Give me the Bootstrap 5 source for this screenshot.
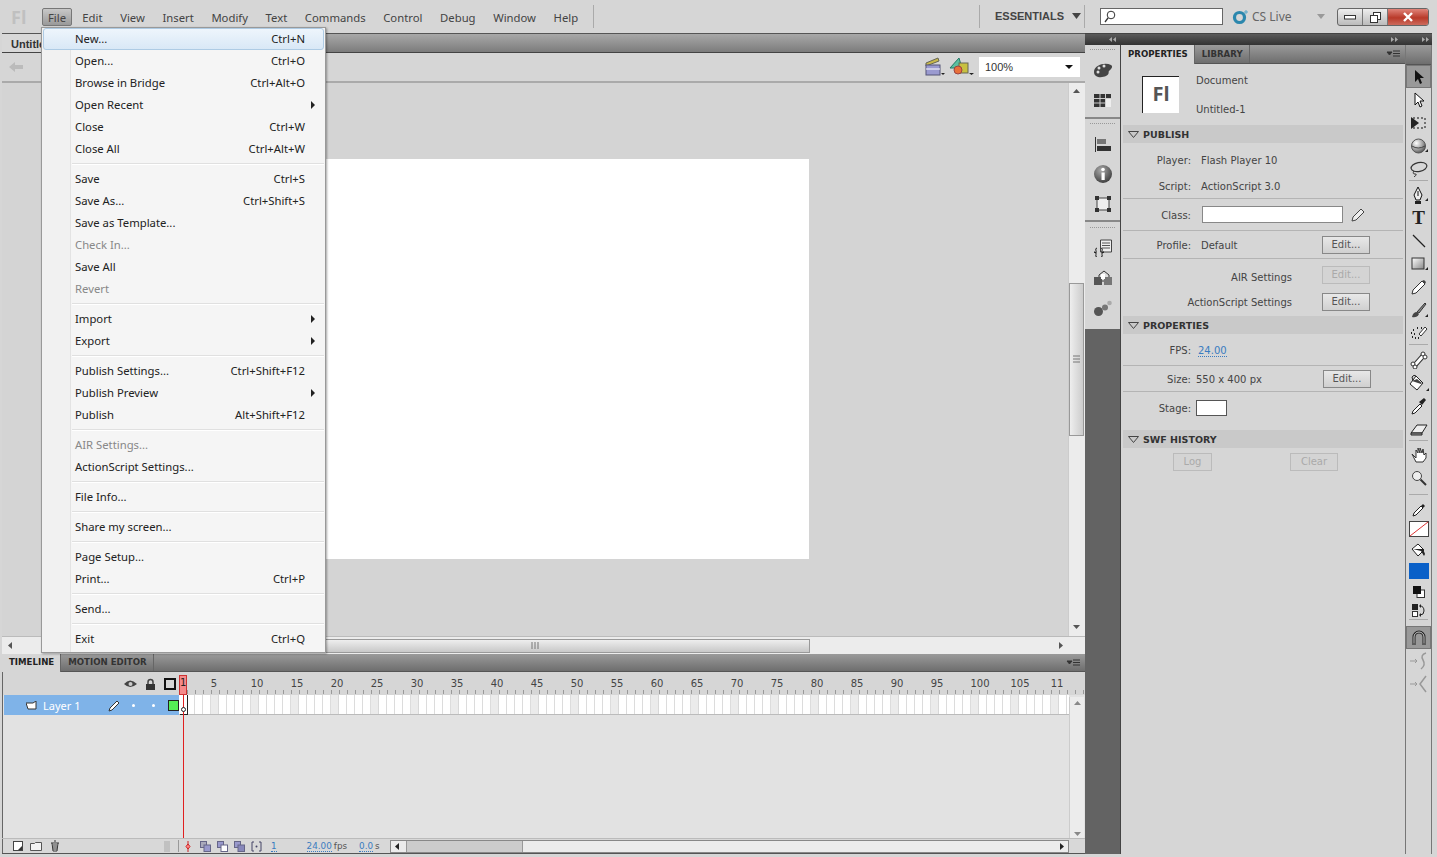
<!DOCTYPE html>
<html lang="en">
<head>
<meta charset="UTF-8">
<title>Adobe Flash Professional</title>
<link href="https://cdn.jsdelivr.net/npm/bootstrap@5.3.0/dist/css/bootstrap.min.css" rel="stylesheet">
<style>
html, body { height: 100%; }
body { width: 1437px; height: 857px; overflow: hidden; background: #d6d6d6; color: #333; font: 11.3px/1 "Noto Sans", sans-serif; position: relative; }
svg { display: block; flex: none; }

/* app menu bar */
.app-bar { height: 33px; padding: 8px 8px 0 11px; color: #444; }
.logo-text { width: 31px; font: bold 18px/18px "Open Sans", sans-serif; color: #c0c0c0; }
.app-item { height: 18px; padding: 0 7.300px; line-height: 17px; border: 1px solid transparent; margin-right: 1px; }
.app-item.on { background: linear-gradient(#c8c8c8, #999); border-color: #777; border-radius: 2px; padding: 0 4px; width: 30px; text-align: center; margin-right: 2px; }
.v-rule { width: 1px; height: 23px; background: #aaa; margin-top: -3px; }
.help-rule { margin-left: 5px; }
.essentials { font: bold 11px "Liberation Sans", sans-serif; color: #444; margin-left: 15px; width: 89px; line-height: 16px; }
.essentials svg { margin-left: 8px; }
.search-box { width: 123px; height: 17px; background: #fff; border: 1px solid #666; margin-left: 15px; padding-left: 3px; }
.cs-live { width: 93px; margin-left: 9px; margin-right: 12px; color: #666; font-size: 12px; gap: 3px; height: 17px; }
.win-btns { width: 92px; height: 18px; border: 1px solid #666; border-radius: 3px; overflow: hidden; background: linear-gradient(#eee, #bbb); }
.win-btn { width: 25px; border-right: 1px solid #777; }
.win-close { flex: 1; background: linear-gradient(#e0847a, #b93a2a 55%, #cc6a5c); }

/* main layout */
.main-row { height: 824px; padding: 0 5px 3px 2px; }
.work-col { width: 1083px; }
.doc-tabs { height: 20px; background: linear-gradient(#a8a8a8, #7c7c7c); border-top: 1px solid #555; border-bottom: 1px solid #444; }
.doc-tab { width: 60px; background: #d8d8d8; padding: 4px 0 0 9px; font: bold 11px "Liberation Sans", sans-serif; color: #333; }
.doc-tools { height: 30px; border-bottom: 2px solid #aaa; padding: 0 5px 0 6px; }
.zoom-select { width: 101px; height: 20px; background: #fff; margin-left: 4px; font: 11px "Liberation Sans", sans-serif; padding-left: 6px; }
.stage-row { height: 553px; }
.stage-area { width: 1066px; background: #d4d4d4; padding: 76px 0 0 257px; }
.stage-sheet { width: 550px; height: 400px; background: #fff; }
.v-scroll { width: 17px; background: #ececec; border-left: 1px solid #ccc; padding: 4px 0; }
.v-thumb { width: 15px; height: 153px; margin: 188px 0 187px; border: 1px solid #999; background: linear-gradient(90deg, #eee, #ccc); }
.h-scroll { height: 18px; background: #ececec; border-top: 1px solid #bbb; padding-right: 20px; }
.h-thumb { width: 550px; height: 14px; margin-left: 246px; border: 1px solid #999; background: linear-gradient(#eee, #c8c8c8); }

/* timeline */
.panel-tabs { height: 18px; background: linear-gradient(#9a9a9a, #6e6e6e); border-bottom: 1px solid #555; font: bold 8.6px "DejaVu Sans", sans-serif; }
.panel-tab { padding: 0 6px 0 7px; line-height: 17px; color: #333; border-right: 1px solid #666; }
.panel-tab.on { background: #d6d6d6; color: #222; height: 18px; }
.tabs-menu { margin-left: auto; margin-right: 4px; }
.tl-head { height: 23px; box-shadow: inset 1px 0 #666; }
.tl-side { width: 177px; padding-right: 3px; }
.tl-ruler { flex: 1; position: relative; font: 10px "DejaVu Sans", sans-serif; color: #444; background: repeating-linear-gradient(90deg, #999 0 1px, transparent 1px 8px) 0 18px / 100% 4px no-repeat; }
.ruler-num { position: absolute; top: 6px; transform: translateX(-50%); }
.tl-grid { height: 143px; background: #e2e2e2; box-shadow: inset 1px 0 #666; }
.tl-layer { height: 20px; }
.layer-row { width: 175px; margin-left: 2px; background: #7fb3e8; color: #fff; font: 11px "Noto Sans", sans-serif; padding-left: 22px; }
.layer-name { width: 70px; margin-left: 6px; }
.layer-dot-a { margin-left: 11px; }
.layer-dot-b { margin-left: 17px; }
.layer-box { margin-left: 13px; }
.tl-frames { flex: 1; border-bottom: 1px solid #bbb; background: repeating-linear-gradient(90deg, transparent 0 32px, #ebebeb 32px 39px, #d8d8d8 39px 40px), repeating-linear-gradient(90deg, #fff 0 7px, #dcdcdc 7px 8px); }
.tl-scroll { width: 15px; margin: 2px 1px 0 0; background: #ececec; border-left: 1px solid #ccc; padding-top: 2px; }
.tl-status { height: 16px; background: #d8d8d8; border-top: 1px solid #bbb; border-bottom: 1px solid #555; box-shadow: inset 1px 0 #666; font: 8.8px "DejaVu Sans", sans-serif; color: #555; }
.tl-status-side { width: 177px; padding: 0 0 0 11px; border-right: 1px solid #999; }
.st-gap-7 { margin-left: 7px; }
.st-marker { margin-left: 6px; }
.st-first { margin-left: 9px; }
.st-gap { margin-left: 6px; }
.st-one { margin-left: 9px; }
.st-fps { margin-left: 30px; }
.st-unit { margin-left: 2px; }
.st-time { margin-left: 12px; }
.tl-link { color: #3a7cc0; border-bottom: 1px dotted #3a7cc0; }
.tl-hscroll { width: 679px; height: 13px; background: #ececec; border: 1px solid #888; margin-left: auto; margin-right: 16px; }
.tl-hthumb { width: 117px; height: 100%; margin-left: 3px; background: #ccc; border-left: 1px solid #999; border-right: 1px solid #999; }
.playhead-box { position: absolute; left: 179px; top: 675px; width: 8px; height: 20px; background: #f58a8a; border: 1px solid #c33; font: 10px "DejaVu Sans", sans-serif; color: #222; text-align: center; line-height: 14px; }
.playhead-line { position: absolute; left: 183px; top: 695px; width: 1px; height: 143px; background: #e02020; }
.key-cell { position: absolute; left: 180px; top: 695px; width: 8px; height: 20px; border: 1px solid #222; border-width: 0 1px 1px 0; background: #fff; }
.key-dot { position: absolute; left: 181px; top: 707px; width: 5px; height: 5px; border: 1px solid #222; border-radius: 50%; background: #fff; }

/* right dock */
.dock-col { width: 347px; }
.dock-head { height: 12px; background: linear-gradient(#5a5a5a, #333); border-top: 1px solid #444; padding: 0 3px 0 24px; }
.dock-body { flex: 1; min-height: 0; }
.icon-strip { width: 36px; background: #636363; border-right: 1px solid #444; }
.strip-group { background: #d6d6d6; border-bottom: 2px solid #888; padding-bottom: 1px; }
.strip-group.first { padding-bottom: 2px; }
.strip-group.last { border-bottom: 0; padding: 1px 0 6px; }
.strip-grip { height: 6px; margin: 2px 5px 2px; background: repeating-linear-gradient(90deg, #999 0 1px, transparent 1px 2px) 0 2px / 100% 1px no-repeat; }
.strip-icon { height: 30px; }
.prop-col { width: 284px; padding: 0 2px; font: 10px "DejaVu Sans", sans-serif; color: #444; }
.prop-tabs { height: 19px; margin: 0 -2px; }
.prop-tabs .panel-tab { line-height: 18px; }
.prop-tabs .panel-tab.on { height: 19px; }
.doc-info { height: 61px; padding-left: 19px; }
.fl-box { width: 37px; height: 37px; background: #fff; border-left: 1px solid #222; border-top: 1px solid #222; font: bold 20px "Open Sans", sans-serif; color: #555; text-align: center; line-height: 34px; }
.doc-text { margin-left: 17px; height: 41px; padding-top: 1px; }
.sec-head { height: 18px; background: #c9c9c9; font: bold 9.5px "DejaVu Sans", sans-serif; color: #333; padding-left: 5px; gap: 4px; }
.prop-row { padding-right: 33px; border-bottom: 1px solid #b4b4b4; }
.prop-row.plain { border-bottom: 0; }
.row-player { height: 30px; padding-top: 2px; }
.row-h26 { height: 26px; }
.row-h26.tight { padding-right: 32px; }
.row-h27 { height: 26px; padding-bottom: 2px; }
.row-h31 { height: 31px; }
.row-fps { height: 32px; }
.row-h28 { height: 28px; }
.row-h32 { height: 32px; }
.row-stage { height: 38px; padding-bottom: 7px; }
.prop-label { width: 68px; text-align: right; flex: none; padding-top: 2px; }
.prop-label.wide { width: 169px; padding-top: 0; }
.prop-label.air { padding-top: 6px; }
.prop-value { margin-left: 10px; padding-top: 2px; }
.prop-value.near { margin-left: 5px; }
.fps-link { color: #3a7cc0; border-bottom: 1px dotted #3a7cc0; margin-left: 7px; margin-top: 2px; }
.class-input { width: 141px; height: 17px; background: #fff; border: 1px solid #888; margin-left: 11px; margin-right: 8px; }
.flash-btn { width: 48px; height: 18px; margin-left: auto; padding: 0; font: 10px/16px "DejaVu Sans", sans-serif; color: #555; border: 1px solid #888; border-radius: 0; background: linear-gradient(#e8e8e8, #d0d0d0); }
.flash-btn:disabled { color: #aaa; border-color: #bbb; opacity: 1; background: #d4d4d4; }
.stage-swatch { width: 31px; height: 16px; background: #fff; border: 1px solid #555; margin-left: 5px; }
.log-row { padding: 5px 65px 0 50px; }
.log-btn { margin: 0; }
.log-btn.short { width: 39px; }

/* tool column */
.tool-col { width: 27px; border-left: 1px solid #777; border-right: 1px solid #777; }
.tool-top { height: 20px; flex: none; background: linear-gradient(#9a9a9a, #6e6e6e); border-bottom: 1px solid #555; }
.tool-btn { height: 23px; }
.tool-btn.on { background: #999; border: 1px solid #777; }
.tool-sep { height: 3px; margin: 0 3px; border-top: 1px solid #aaa; }
.tool-sep.s4 { height: 4px; }
.tool-sep.s7 { height: 7px; }
.tool-sep.s12 { margin-top: 5px; height: 7px; }
.tool-swatch { height: 21px; }
.tool-short { height: 17px; }
.tool-t { font: bold 19px/19px "Liberation Serif", serif; color: #222; }

/* File menu */
.file-menu { position: absolute; left: 41px; top: 27px; width: 285px; height: 626px; background: linear-gradient(90deg, #f1f1f1 0 28px, #e3e3e3 28px 29px, #f5f5f5 29px); border: 1px solid #999; box-shadow: 1px 1px 2px rgba(0,0,0,.35); padding: 0 1px 1px; color: #222; z-index: 5; }
.menu-line { height: 22px; padding: 0 19px 0 32px; position: relative; }
.menu-line.hot { background: linear-gradient(#eef5fc, #d9e8f6); border: 1px solid #aecbe4; border-radius: 3px; padding: 0 18px 0 31px; }
.menu-line.off { color: #888; }
.menu-key { margin-left: auto; }
.menu-arrow { position: absolute; right: 9px; top: 7px; width: 0; height: 0; border-left: 4px solid #222; border-top: 4px solid transparent; border-bottom: 4px solid transparent; }
.menu-sep { height: 8px; padding: 3px 0 3px 29px; }
.menu-sep::after { content: ""; display: block; height: 2px; background: #e0e0e0; border-bottom: 1px solid #fff; }
</style>
</head>
<body>

<svg width="0" height="0" class="position-absolute">
    <defs>
        <radialGradient id="ballFill" cx=".35" cy=".3" r=".8"><stop offset="0" stop-color="#fff"/><stop offset=".6" stop-color="#999"/><stop offset="1" stop-color="#444"/></radialGradient>
        <linearGradient id="boxFill" x1="0" y1="0" x2="1" y2="1"><stop offset="0" stop-color="#fff"/><stop offset="1" stop-color="#888"/></linearGradient>
        <radialGradient id="infoFill" cx=".4" cy=".3" r=".8"><stop offset="0" stop-color="#aaa"/><stop offset="1" stop-color="#333"/></radialGradient>
    </defs>
</svg>

<div class="app-bar d-flex align-items-start">
    <span class="logo-text">Fl</span>
    <div class="d-flex">
        <span class="app-item on">File</span>
        <span class="app-item">Edit</span>
        <span class="app-item">View</span>
        <span class="app-item">Insert</span>
        <span class="app-item">Modify</span>
        <span class="app-item">Text</span>
        <span class="app-item">Commands</span>
        <span class="app-item">Control</span>
        <span class="app-item">Debug</span>
        <span class="app-item">Window</span>
        <span class="app-item">Help</span>
    </div>
    <div class="v-rule help-rule"></div>
    <div class="v-rule ms-auto"></div>
    <div class="essentials d-flex align-items-center">ESSENTIALS<svg width="9" height="6" viewBox="0 0 9 6"><path d="M0 0h9L4.500 6z" fill="#444"/></svg></div>
    <div class="v-rule"></div>
    <div class="search-box d-flex align-items-center"><svg width="12" height="13" viewBox="0 0 12 13"><circle cx="7" cy="5" r="3.800" fill="none" stroke="#333"/><path d="M4 8 1 12" stroke="#333" stroke-width="1.300"/></svg></div>
    <div class="cs-live d-flex align-items-center">
        <svg width="17" height="16" viewBox="0 0 17 16"><circle cx="7.500" cy="8.500" r="5" fill="none" stroke="#2b87ad" stroke-width="3.200"/><path d="M14 1v4M12 3h4" stroke="#5aa8c8"/></svg>
        <span>CS Live</span>
        <svg class="ms-auto" width="8" height="5" viewBox="0 0 8 5"><path d="M0 0h8L4 5z" fill="#999"/></svg>
    </div>
    <div class="win-btns d-flex">
        <div class="win-btn d-flex align-items-center justify-content-center"><svg width="12" height="6" viewBox="0 0 12 6"><rect x=".5" y="1.500" width="11" height="3.500" fill="#fff" stroke="#333"/></svg></div>
        <div class="win-btn d-flex align-items-center justify-content-center"><svg width="11" height="11" viewBox="0 0 11 11"><rect x="3.500" y=".5" width="7" height="7" fill="#fff" stroke="#333"/><rect x=".5" y="3.500" width="7" height="7" fill="#fff" stroke="#333"/></svg></div>
        <div class="win-close d-flex align-items-center justify-content-center"><svg width="12" height="10" viewBox="0 0 12 10"><path d="M2 1l8 8M10 1 2 9" stroke="#fff" stroke-width="2.400"/></svg></div>
    </div>
</div>

<div class="main-row d-flex">
    <div class="work-col d-flex flex-column">
        <div class="doc-tabs d-flex"><div class="doc-tab">Untitled-1</div></div>
        <div class="doc-tools d-flex align-items-center">
            <svg width="15" height="12" viewBox="0 0 15 12"><path d="M15 4H7V1L1 6l6 5V8h8z" fill="#bbb"/></svg>
            <svg class="ms-3" width="22" height="20" viewBox="0 0 22 20"><path d="M3 6 15 1l1 3L3 9z" fill="#c8b84a" stroke="#665"/><rect x="3" y="8" width="14" height="10" fill="#9a9ad0" stroke="#557"/><path d="M3 12h14" stroke="#fff"/></svg>
            <svg class="ms-auto" width="22" height="20" viewBox="0 0 22 20"><path d="M3 6 15 1l1 3L3 9z" fill="#c8b84a" stroke="#665"/><rect x="3" y="8" width="14" height="10" fill="#9a9ad0" stroke="#557"/><path d="M3 12h14" stroke="#fff"/><path d="m18 16 4 0-2 2z" fill="#222"/></svg>
            <svg class="ms-1" width="26" height="20" viewBox="0 0 26 20"><path d="M10 1 1 11h12z" fill="#5bc0a0" stroke="#276"/><rect x="10" y="6" width="9" height="10" fill="#c8c040" stroke="#665"/><circle cx="9" cy="13" r="4" fill="#e8703a" stroke="#944"/><path d="m20 16 5 0-2.500 2z" fill="#222"/></svg>
            <div class="zoom-select d-flex align-items-center justify-content-between">100%<svg width="12" height="8" viewBox="0 0 12 8" class="me-1"><path d="M1 2h8L5 6z" fill="#111"/></svg></div>
        </div>
        <div class="stage-row d-flex">
            <div class="stage-area"><div class="stage-sheet"></div></div>
            <div class="v-scroll">
                <svg width="15" height="8" viewBox="0 0 15 8"><path d="M4 6h7L7.500 2z" fill="#555"/></svg>
                <div class="v-thumb d-flex align-items-center justify-content-center"><svg width="7" height="9" viewBox="0 0 7 9"><path d="M0 1h7M0 4h7M0 7h7" stroke="#777"/></svg></div>
                <svg width="15" height="8" viewBox="0 0 15 8"><path d="M4 2h7L7.500 6z" fill="#555"/></svg>
            </div>
        </div>
        <div class="h-scroll d-flex align-items-center">
            <svg class="ms-1" width="8" height="9" viewBox="0 0 8 9"><path d="M6 1v7L2 4.500z" fill="#555"/></svg>
            <div class="h-thumb d-flex align-items-center justify-content-center"><svg width="9" height="7" viewBox="0 0 9 7"><path d="M1 0v7M4 0v7M7 0v7" stroke="#777"/></svg></div>
            <svg class="ms-auto" width="8" height="9" viewBox="0 0 8 9"><path d="M2 1v7l4-3.500z" fill="#555"/></svg>
        </div>
        <div class="panel-tabs d-flex">
            <div class="panel-tab on">TIMELINE</div>
            <div class="panel-tab">MOTION EDITOR</div>
            <svg class="tabs-menu" width="15" height="17" viewBox="0 0 15 17"><path d="M1 7h5l-2.500 3zM7 6h7M7 8.500h7M7 11h7" stroke="#333" fill="#333"/></svg>
        </div>
        <div class="tl-head d-flex">
            <div class="tl-side d-flex align-items-center justify-content-end gap-2">
                <svg width="13" height="10" viewBox="0 0 13 10"><path d="M0 5q6-7 13 0-7 6-13 0z" fill="#444"/><circle cx="6.500" cy="5" r="2" fill="#ccc"/></svg>
                <svg width="11" height="12" viewBox="0 0 11 12"><path d="M3 6V4a2.500 2.500 0 0 1 5 0v2" fill="none" stroke="#444" stroke-width="1.500"/><rect x="1" y="6" width="9" height="6" fill="#333"/></svg>
                <svg width="12" height="12" viewBox="0 0 12 12"><rect x="1" y="1" width="10" height="10" fill="none" stroke="#111" stroke-width="2"/></svg>
            </div>
            <div class="tl-ruler">
                <span class="ruler-num" style="left:35px">5</span>
                <span class="ruler-num" style="left:78px">10</span>
                <span class="ruler-num" style="left:118px">15</span>
                <span class="ruler-num" style="left:158px">20</span>
                <span class="ruler-num" style="left:198px">25</span>
                <span class="ruler-num" style="left:238px">30</span>
                <span class="ruler-num" style="left:278px">35</span>
                <span class="ruler-num" style="left:318px">40</span>
                <span class="ruler-num" style="left:358px">45</span>
                <span class="ruler-num" style="left:398px">50</span>
                <span class="ruler-num" style="left:438px">55</span>
                <span class="ruler-num" style="left:478px">60</span>
                <span class="ruler-num" style="left:518px">65</span>
                <span class="ruler-num" style="left:558px">70</span>
                <span class="ruler-num" style="left:598px">75</span>
                <span class="ruler-num" style="left:638px">80</span>
                <span class="ruler-num" style="left:678px">85</span>
                <span class="ruler-num" style="left:718px">90</span>
                <span class="ruler-num" style="left:758px">95</span>
                <span class="ruler-num" style="left:801px">100</span>
                <span class="ruler-num" style="left:841px">105</span>
                <span class="ruler-num" style="left:878px">11</span>
            </div>
        </div>
        <div class="tl-grid d-flex">
            <div class="flex-grow-1">
                <div class="tl-layer d-flex">
                    <div class="layer-row d-flex align-items-center">
                        <svg width="11" height="9" viewBox="0 0 11 9"><path d="M0 2h7l3-2v8H2z" fill="#fff" stroke="#333"/></svg>
                        <span class="layer-name">Layer 1</span>
                        <svg width="13" height="13" viewBox="0 0 13 13"><path d="M1 12l1-3 7-7 2 2-7 7z" fill="#fff" stroke="#333"/></svg>
                        <svg class="layer-dot-a" width="3" height="3" viewBox="0 0 3 3"><circle cx="1.500" cy="1.500" r="1.500" fill="#fff"/></svg>
                        <svg class="layer-dot-b" width="3" height="3" viewBox="0 0 3 3"><circle cx="1.500" cy="1.500" r="1.500" fill="#fff"/></svg>
                        <svg class="layer-box" width="11" height="11" viewBox="0 0 11 11"><rect x=".5" y=".5" width="10" height="10" fill="#55ee55" stroke="#222"/></svg>
                    </div>
                    <div class="tl-frames"></div>
                </div>
            </div>
            <div class="tl-scroll d-flex flex-column justify-content-between">
                <svg width="15" height="8" viewBox="0 0 15 8"><path d="M4 6h7L7.500 2z" fill="#888"/></svg>
                <svg width="15" height="8" viewBox="0 0 15 8"><path d="M4 2h7L7.500 6z" fill="#888"/></svg>
            </div>
        </div>
        <div class="tl-status d-flex align-items-center">
            <div class="tl-status-side d-flex align-items-center">
                <svg width="10" height="10" viewBox="0 0 10 10"><rect x=".5" y=".5" width="9" height="9" fill="#fff" stroke="#444"/><path d="M5 9h4V5z" fill="#333"/></svg>
                <svg class="st-gap-7" width="12" height="10" viewBox="0 0 12 10"><path d="M.5 2.500h4l1-1h6v8H.5z" fill="#f4f4f4" stroke="#555"/></svg>
                <svg class="ms-2" width="10" height="12" viewBox="0 0 10 12"><path d="M1 3h8M2 3l1 8h4l1-8M4 1h2M4 4v6M6 4v6" fill="#eee" stroke="#333"/></svg>
                <svg class="ms-auto me-2" width="6" height="11" viewBox="0 0 6 11"><path d="M1 0v11M3 0v11M5 0v11" stroke="#aaa"/></svg>
            </div>
            <svg class="st-marker" width="6" height="11" viewBox="0 0 6 11"><path d="M3 0v11" stroke="#c22"/><path d="M3 3l2 2.500-2 2.500-2-2.500z" fill="#f88" stroke="#c22"/></svg>
            <svg class="st-first" width="11" height="11" viewBox="0 0 11 11"><rect x=".5" y=".5" width="6" height="6" fill="#aab" stroke="#668"/><rect x="4" y="4" width="6.500" height="6.500" fill="#99c" stroke="#668"/></svg>
            <svg class="st-gap" width="11" height="11" viewBox="0 0 11 11"><rect x=".5" y=".5" width="6" height="6" fill="#99c" stroke="#668"/><rect x="4" y="4" width="6.500" height="6.500" fill="#fff" stroke="#668"/></svg>
            <svg class="st-gap" width="11" height="11" viewBox="0 0 11 11"><rect x=".5" y=".5" width="6" height="6" fill="#99c" stroke="#668"/><rect x="4" y="4" width="6.500" height="6.500" fill="#88b" stroke="#668"/></svg>
            <svg class="st-gap" width="11" height="11" viewBox="0 0 11 11"><path d="M3 1H1v9h2M8 1h2v9H8" fill="none" stroke="#446"/><circle cx="5.500" cy="5.500" r="1" fill="#446"/></svg>
            <span class="tl-link st-one">1</span>
            <span class="tl-link st-fps">24.00</span><span class="st-unit">fps</span>
            <span class="tl-link st-time">0.0</span><span class="st-unit">s</span>
            <div class="tl-hscroll d-flex align-items-center">
                <svg width="12" height="9" viewBox="0 0 12 9"><path d="M8 1v7L4 4.500z" fill="#222"/></svg>
                <div class="tl-hthumb"></div>
                <svg class="ms-auto" width="12" height="9" viewBox="0 0 12 9"><path d="M4 1v7l4-3.500z" fill="#222"/></svg>
            </div>
        </div>
    </div>

    <div class="dock-col d-flex flex-column">
        <div class="dock-head d-flex align-items-center">
            <svg width="7" height="5" viewBox="0 0 7 5"><path d="M3 0v5L0 2.500zM7 0v5L4 2.500z" fill="#aaa"/></svg>
            <svg class="ms-auto" width="7" height="5" viewBox="0 0 7 5"><path d="M0 0v5l3-2.500zM4 0v5l3-2.500z" fill="#aaa"/></svg>
            <svg class="ms-4" width="7" height="5" viewBox="0 0 7 5"><path d="M0 0v5l3-2.500zM4 0v5l3-2.500z" fill="#aaa"/></svg>
        </div>
        <div class="dock-body d-flex">
            <div class="icon-strip d-flex flex-column">
                <div class="strip-group first">
                    <div class="strip-grip"></div>
                    <div class="strip-icon d-flex align-items-center justify-content-center"><svg width="20" height="16" viewBox="0 0 20 16"><path d="M1 10C1 3 12 0 18 3c3 2-1 5-2 6s1 3-3 5-12 2-12-4z" fill="#444"/><circle cx="6" cy="6" r="1.500" fill="#ddd"/><circle cx="11" cy="4" r="1.500" fill="#ddd"/><circle cx="5" cy="10" r="1.500" fill="#ddd"/></svg></div>
                    <div class="strip-icon d-flex align-items-center justify-content-center"><svg width="17" height="13" viewBox="0 0 17 13"><rect width="17" height="13" fill="#333"/><path d="M6 0v13M11.500 0v13M0 4.500h17M0 9h17" stroke="#ccc"/><rect x="12" y="5" width="5" height="8" fill="#eee"/></svg></div>
                </div>
                <div class="strip-group">
                    <div class="strip-grip"></div>
                    <div class="strip-icon d-flex align-items-center justify-content-center"><svg width="16" height="15" viewBox="0 0 16 15"><path d="M.5 0v15" stroke="#333"/><rect x="2" y="2" width="9" height="5" fill="#777"/><rect x="2" y="9" width="14" height="5" fill="#333"/></svg></div>
                    <div class="strip-icon d-flex align-items-center justify-content-center"><svg width="18" height="18" viewBox="0 0 18 18"><circle cx="9" cy="9" r="9" fill="url(#infoFill)"/><circle cx="9" cy="4.500" r="1.800" fill="#fff"/><rect x="7.500" y="7.500" width="3.200" height="7.500" fill="#fff"/></svg></div>
                    <div class="strip-icon d-flex align-items-center justify-content-center"><svg width="16" height="16" viewBox="0 0 16 16"><rect x="2" y="2" width="12" height="12" fill="#eee" stroke="#444"/><path d="M0 0h4v4H0zM12 0h4v4h-4zM0 12h4v4H0zM12 12h4v4h-4z" fill="#333"/></svg></div>
                </div>
                <div class="strip-group last">
                    <div class="strip-grip"></div>
                    <div class="strip-icon d-flex align-items-center justify-content-center"><svg width="18" height="18" viewBox="0 0 18 18"><path d="M6.500 1h11v12h-11z" fill="#eee" stroke="#444"/><path d="M8 4h8M8 6.500h8M8 9h8" stroke="#555"/><path d="M3 9Q1 9 2 12t-2 1q3 0 2 2.500T3 18M7 9q2 0 1 3t2 1q-3 0-2 2.500T7 18" fill="none" stroke="#222"/></svg></div>
                    <div class="strip-icon d-flex align-items-center justify-content-center"><svg width="18" height="16" viewBox="0 0 18 16"><path d="M5 5l5-4 5 4v6H5z" fill="#ddd" stroke="#333"/><rect x="0" y="7" width="8" height="8" fill="#555"/><rect x="10" y="7" width="8" height="8" fill="#777"/><rect x="7" y="4" width="4" height="5" fill="#fff"/></svg></div>
                    <div class="strip-icon d-flex align-items-center justify-content-center"><svg width="18" height="16" viewBox="0 0 18 16"><circle cx="4.500" cy="11.500" r="4.500" fill="#555"/><circle cx="11" cy="7.500" r="3" fill="#777"/><circle cx="15.500" cy="3" r="2.300" fill="#aaa"/></svg></div>
                </div>
            </div>

            <div class="prop-col">
                <div class="panel-tabs prop-tabs d-flex">
                    <div class="panel-tab on">PROPERTIES</div>
                    <div class="panel-tab">LIBRARY</div>
                    <svg class="tabs-menu" width="15" height="18" viewBox="0 0 15 18"><path d="M1 7h5l-2.500 3zM7 6h7M7 8.500h7M7 11h7" stroke="#333" fill="#333"/></svg>
                </div>
                <div class="doc-info d-flex align-items-center">
                    <div class="fl-box">Fl</div>
                    <div class="doc-text d-flex flex-column justify-content-between"><span>Document</span><span>Untitled-1</span></div>
                </div>
                <div class="sec-head d-flex align-items-center"><svg width="11" height="7" viewBox="0 0 11 7"><path d="M.5.500h10l-5 6z" fill="none" stroke="#444"/></svg>PUBLISH</div>
                <div class="prop-row plain row-player d-flex align-items-center"><span class="prop-label">Player:</span><span class="prop-value">Flash Player 10</span></div>
                <div class="prop-row row-h26 d-flex align-items-center"><span class="prop-label">Script:</span><span class="prop-value">ActionScript 3.0</span></div>
                <div class="prop-row row-h32 d-flex align-items-center"><span class="prop-label">Class:</span><div class="class-input"></div><svg width="15" height="15" viewBox="0 0 15 15"><path d="M1 14l1-4 8-8 3 3-8 8z" fill="#eee" stroke="#444"/></svg></div>
                <div class="prop-row row-h28 d-flex align-items-center"><span class="prop-label">Profile:</span><span class="prop-value">Default</span><button class="btn flash-btn" type="button">Edit...</button></div>
                <div class="prop-row plain row-h31 d-flex align-items-center"><span class="prop-label wide air">AIR Settings</span><button class="btn flash-btn" type="button" disabled>Edit...</button></div>
                <div class="prop-row plain row-h27 d-flex align-items-center"><span class="prop-label wide">ActionScript Settings</span><button class="btn flash-btn" type="button">Edit...</button></div>
                <div class="sec-head d-flex align-items-center"><svg width="11" height="7" viewBox="0 0 11 7"><path d="M.5.500h10l-5 6z" fill="none" stroke="#444"/></svg>PROPERTIES</div>
                <div class="prop-row row-fps d-flex align-items-center"><span class="prop-label">FPS:</span><span class="fps-link">24.00</span></div>
                <div class="prop-row row-h26 tight d-flex align-items-center"><span class="prop-label">Size:</span><span class="prop-value near">550 x 400 px</span><button class="btn flash-btn" type="button">Edit...</button></div>
                <div class="prop-row plain row-stage d-flex align-items-center"><span class="prop-label">Stage:</span><div class="stage-swatch"></div></div>
                <div class="sec-head d-flex align-items-center"><svg width="11" height="7" viewBox="0 0 11 7"><path d="M.5.500h10l-5 6z" fill="none" stroke="#444"/></svg>SWF HISTORY</div>
                <div class="log-row d-flex justify-content-between">
                    <button class="btn flash-btn log-btn short" type="button" disabled>Log</button>
                    <button class="btn flash-btn log-btn" type="button" disabled>Clear</button>
                </div>
            </div>

            <div class="tool-col d-flex flex-column">
                <div class="tool-top"></div>
                <div class="tool-btn on d-flex align-items-center justify-content-center"><svg width="12" height="16" viewBox="0 0 12 16"><path d="M2 1v12l3-3 2 5 2-1-2-5h4z" fill="#111"/></svg></div>
                <div class="tool-btn d-flex align-items-center justify-content-center"><svg width="12" height="16" viewBox="0 0 12 16"><path d="M2 1v12l3-3 2 5 2-1-2-5h4z" fill="#fff" stroke="#111"/></svg></div>
                <div class="tool-btn d-flex align-items-center justify-content-center"><svg width="18" height="16" viewBox="0 0 18 16"><path d="M3 3h12v10H3z" fill="none" stroke="#111" stroke-dasharray="2 2"/><path d="M1 2l8 6-8 6z" fill="#222"/></svg></div>
                <div class="tool-btn d-flex align-items-center justify-content-center"><svg width="18" height="16" viewBox="0 0 18 16"><circle cx="8.500" cy="8" r="7" fill="url(#ballFill)" stroke="#555"/><path d="M2 8q6 4 13 0" fill="none" stroke="#444"/><path d="m15 14 3 0 0-3z" fill="#222"/></svg></div>
                <div class="tool-btn d-flex align-items-center justify-content-center"><svg width="18" height="16" viewBox="0 0 18 16"><ellipse cx="9" cy="6" rx="8" ry="4.500" fill="none" stroke="#333" stroke-width="1.200" transform="rotate(-12 9 6)"/><path d="M4 10q-2 3 1 3t-1 3" fill="none" stroke="#333"/></svg></div>
                <div class="tool-sep"></div>
                <div class="tool-btn d-flex align-items-center justify-content-center"><svg width="18" height="18" viewBox="0 0 18 18"><path d="M8 1l4 8-2 5H6L4 9z" fill="#eee" stroke="#111"/><path d="M8 5v5" stroke="#111"/><path d="M5 15h6v3H5z" fill="#222"/><path d="m15 15 3 0 0-3z" fill="#222"/></svg></div>
                <div class="tool-btn d-flex align-items-center justify-content-center"><span class="tool-t">T</span></div>
                <div class="tool-btn d-flex align-items-center justify-content-center"><svg width="16" height="16" viewBox="0 0 16 16"><path d="M2 2l12 12" stroke="#222" stroke-width="1.200"/></svg></div>
                <div class="tool-btn d-flex align-items-center justify-content-center"><svg width="18" height="16" viewBox="0 0 18 16"><rect x="2" y="2" width="12" height="11" fill="url(#boxFill)" stroke="#333"/><path d="m15 14 3 0 0-3z" fill="#222"/></svg></div>
                <div class="tool-btn d-flex align-items-center justify-content-center"><svg width="16" height="16" viewBox="0 0 16 16"><path d="M1 15l1-4 9-9 3 3-9 9z" fill="#fff" stroke="#333"/><path d="M11 2l3 3 1-2-2-2z" fill="#444"/></svg></div>
                <div class="tool-btn d-flex align-items-center justify-content-center"><svg width="18" height="16" viewBox="0 0 18 16"><path d="M7 10 15 1l1 1-7 9z" fill="#888" stroke="#333"/><path d="M2 15q1-5 5-5l2 2q-2 4-7 3z" fill="#444"/><path d="m15 15 3 0 0-3z" fill="#222"/></svg></div>
                <div class="tool-btn d-flex align-items-center justify-content-center"><svg width="18" height="16" viewBox="0 0 18 16"><path d="M9 9l6-7 2 2-6 7z" fill="#fff" stroke="#333"/><path d="M3 5h1M7 3h1M11 3h1M1 8h1M4 9h1M2 12h1M5 13h1M8 13h1" stroke="#222" stroke-width="2"/></svg></div>
                <div class="tool-sep s4"></div>
                <div class="tool-btn d-flex align-items-center justify-content-center"><svg width="18" height="18" viewBox="0 0 18 18"><path d="M5 14 13 5" stroke="#333" stroke-width="5"/><path d="M5 14 13 5" stroke="#fff" stroke-width="3"/><circle cx="13" cy="3" r="2" fill="#fff" stroke="#333"/><circle cx="15" cy="6" r="2" fill="#fff" stroke="#333"/><circle cx="3" cy="13" r="2" fill="#fff" stroke="#333"/><circle cx="5" cy="16" r="2" fill="#fff" stroke="#333"/></svg></div>
                <div class="tool-btn d-flex align-items-center justify-content-center"><svg width="20" height="18" viewBox="0 0 20 18"><path d="M7 2 1 10l7 6 6-7z" fill="#fff" stroke="#222"/><path d="M7 2q-2-2-4 1l1 4" fill="none" stroke="#222"/><path d="M3 7l5-2 5 4-1 1z" fill="#444"/><path d="m17 17 3 0 0-3z" fill="#222"/></svg></div>
                <div class="tool-btn d-flex align-items-center justify-content-center"><svg width="16" height="18" viewBox="0 0 16 18"><path d="M1 17l1-3 7-7 2 2-7 7z" fill="#fff" stroke="#222"/><path d="M8 5l5-4 2 2-4 5z" fill="#222"/></svg></div>
                <div class="tool-btn d-flex align-items-center justify-content-center"><svg width="18" height="14" viewBox="0 0 18 14"><path d="M1 11 7 3h10l-5 8z" fill="#eee" stroke="#222"/><path d="M1 11h11v2H1z" fill="#999" stroke="#222"/></svg></div>
                <div class="tool-sep"></div>
                <div class="tool-btn d-flex align-items-center justify-content-center"><svg width="18" height="18" viewBox="0 0 18 18"><path d="M2 8l4 4V4l2 3V2l2 5V2l2 5 1-4 1 6 2-2v5l-3 4H6z" fill="#fff" stroke="#333"/></svg></div>
                <div class="tool-btn d-flex align-items-center justify-content-center"><svg width="16" height="16" viewBox="0 0 16 16"><circle cx="6" cy="6" r="4.500" fill="#eee" stroke="#444"/><path d="M9.500 9.500 15 15" stroke="#333" stroke-width="2"/></svg></div>
                <div class="tool-sep s12"></div>
                <div class="tool-short d-flex align-items-center justify-content-center"><svg width="14" height="14" viewBox="0 0 14 14"><path d="M1 13l1-3 7-7 2 2-7 7z" fill="#fff" stroke="#222"/><path d="M9 3l2-2 2 2-2 2z" fill="#222"/></svg></div>
                <div class="tool-swatch d-flex align-items-center justify-content-center"><svg width="20" height="16" viewBox="0 0 20 16"><rect x=".5" y=".5" width="19" height="15" fill="#fff" stroke="#444"/><path d="M1 15 19 1" stroke="#d33"/></svg></div>
                <div class="tool-swatch d-flex align-items-center justify-content-center"><svg width="16" height="14" viewBox="0 0 16 14"><path d="M1 6l6-5 6 6-6 6z" fill="#fff" stroke="#222"/><path d="M2 6h10l2 5-1 2-3-5z" fill="#222"/></svg></div>
                <div class="tool-swatch d-flex align-items-center justify-content-center"><svg width="20" height="16" viewBox="0 0 20 16"><rect width="20" height="16" fill="#0a60c8"/></svg></div>
                <div class="tool-swatch d-flex align-items-center justify-content-center"><svg width="12" height="12" viewBox="0 0 12 12"><rect x="4" y="4" width="7.500" height="7.500" fill="#fff" stroke="#333"/><rect width="8" height="8" fill="#111"/></svg></div>
                <div class="tool-short d-flex align-items-center justify-content-center"><svg width="13" height="13" viewBox="0 0 13 13"><rect width="6" height="6" fill="#222"/><rect x=".5" y="7.500" width="5" height="5" fill="#fff" stroke="#333"/><path d="M8 2q4 0 4 5M8 11q4 0 4-4" fill="none" stroke="#222"/><path d="M7 2l2-2v4zM7 11l2-2v4z" fill="#222"/></svg></div>
                <div class="tool-sep s7"></div>
                <div class="tool-btn on d-flex align-items-center justify-content-center"><svg width="16" height="17" viewBox="0 0 16 17"><path d="M3 14V8a5 5 0 0 1 10 0v6" fill="none" stroke="#222" stroke-width="3"/><path d="M3 14V8a5 5 0 0 1 10 0v6" fill="none" stroke="#ccc"/><path d="M1 15h4M11 15h4" stroke="#222"/></svg></div>
                <div class="tool-btn d-flex align-items-center justify-content-center"><svg width="20" height="20" viewBox="0 0 20 20"><path d="M1 10h6M6 8l2 2-2 2" fill="none" stroke="#999"/><path d="M17 2q-6 2-3 7t-2 9" fill="none" stroke="#999" stroke-width="1.500"/></svg></div>
                <div class="tool-btn d-flex align-items-center justify-content-center"><svg width="20" height="20" viewBox="0 0 20 20"><path d="M1 10h6M6 8l2 2-2 2" fill="none" stroke="#999"/><path d="M17 2 11 10l6 8" fill="none" stroke="#999" stroke-width="1.500"/></svg></div>
            </div>
        </div>
    </div>
</div>

<div class="playhead-box">1</div>
<div class="key-cell"></div>
<div class="playhead-line"></div>
<div class="key-dot"></div>

<div class="file-menu">
    <div class="menu-line hot d-flex align-items-center"><span>New...</span><span class="menu-key">Ctrl+N</span></div>
    <div class="menu-line d-flex align-items-center"><span>Open...</span><span class="menu-key">Ctrl+O</span></div>
    <div class="menu-line d-flex align-items-center"><span>Browse in Bridge</span><span class="menu-key">Ctrl+Alt+O</span></div>
    <div class="menu-line d-flex align-items-center"><span>Open Recent</span><i class="menu-arrow"></i></div>
    <div class="menu-line d-flex align-items-center"><span>Close</span><span class="menu-key">Ctrl+W</span></div>
    <div class="menu-line d-flex align-items-center"><span>Close All</span><span class="menu-key">Ctrl+Alt+W</span></div>
    <div class="menu-sep"></div>
    <div class="menu-line d-flex align-items-center"><span>Save</span><span class="menu-key">Ctrl+S</span></div>
    <div class="menu-line d-flex align-items-center"><span>Save As...</span><span class="menu-key">Ctrl+Shift+S</span></div>
    <div class="menu-line d-flex align-items-center"><span>Save as Template...</span></div>
    <div class="menu-line off d-flex align-items-center"><span>Check In...</span></div>
    <div class="menu-line d-flex align-items-center"><span>Save All</span></div>
    <div class="menu-line off d-flex align-items-center"><span>Revert</span></div>
    <div class="menu-sep"></div>
    <div class="menu-line d-flex align-items-center"><span>Import</span><i class="menu-arrow"></i></div>
    <div class="menu-line d-flex align-items-center"><span>Export</span><i class="menu-arrow"></i></div>
    <div class="menu-sep"></div>
    <div class="menu-line d-flex align-items-center"><span>Publish Settings...</span><span class="menu-key">Ctrl+Shift+F12</span></div>
    <div class="menu-line d-flex align-items-center"><span>Publish Preview</span><i class="menu-arrow"></i></div>
    <div class="menu-line d-flex align-items-center"><span>Publish</span><span class="menu-key">Alt+Shift+F12</span></div>
    <div class="menu-sep"></div>
    <div class="menu-line off d-flex align-items-center"><span>AIR Settings...</span></div>
    <div class="menu-line d-flex align-items-center"><span>ActionScript Settings...</span></div>
    <div class="menu-sep"></div>
    <div class="menu-line d-flex align-items-center"><span>File Info...</span></div>
    <div class="menu-sep"></div>
    <div class="menu-line d-flex align-items-center"><span>Share my screen...</span></div>
    <div class="menu-sep"></div>
    <div class="menu-line d-flex align-items-center"><span>Page Setup...</span></div>
    <div class="menu-line d-flex align-items-center"><span>Print...</span><span class="menu-key">Ctrl+P</span></div>
    <div class="menu-sep"></div>
    <div class="menu-line d-flex align-items-center"><span>Send...</span></div>
    <div class="menu-sep"></div>
    <div class="menu-line d-flex align-items-center"><span>Exit</span><span class="menu-key">Ctrl+Q</span></div>
</div>
</body>
</html>
